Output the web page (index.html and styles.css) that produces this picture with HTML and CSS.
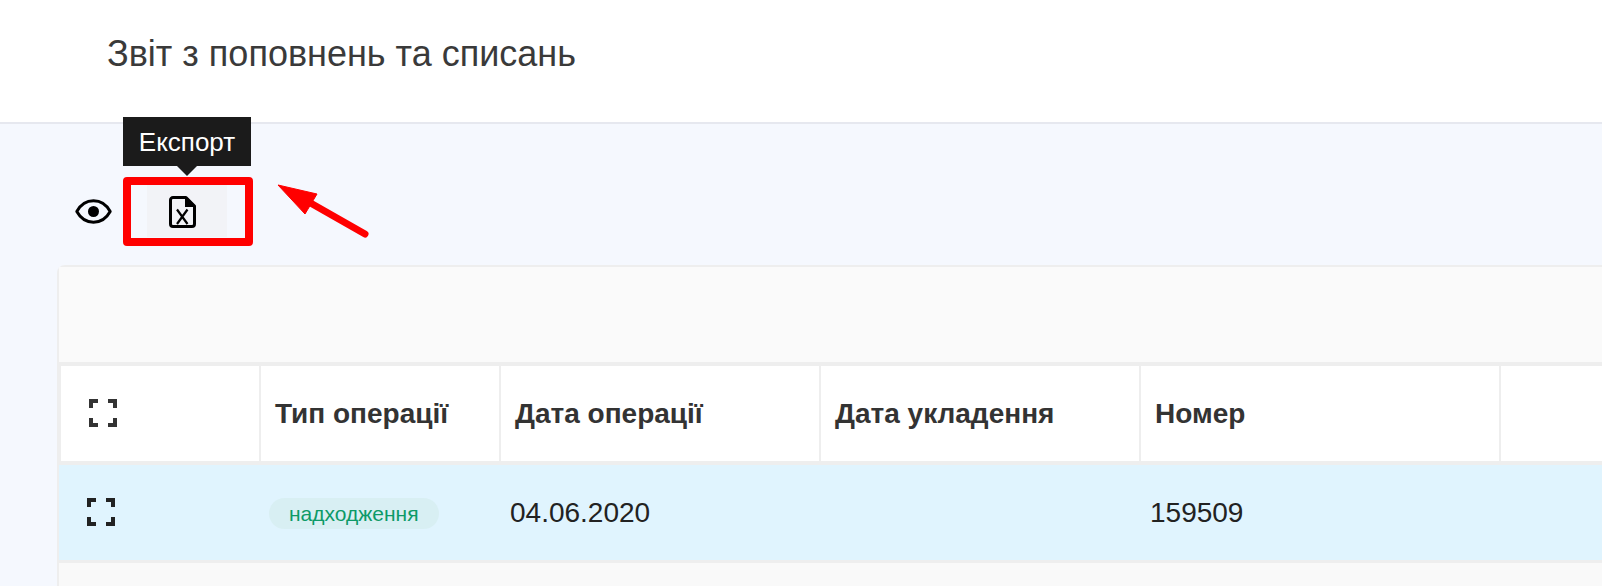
FILE: index.html
```html
<!DOCTYPE html>
<html lang="uk">
<head>
    <meta charset="utf-8">
    <title>Звіт з поповнень та списань</title>
    <link rel="stylesheet" href="styles.css">
</head>
<body>

<header class="title-bar">
    <h1>Звіт з поповнень та списань</h1>
</header>

<!-- Toolbar -->
<div class="toolbar">
    <button type="button" class="tool-eye" aria-label="Колонки">
        <svg width="37" height="25" viewBox="0 0 37 25">
            <path d="M1.8 12.5C5.5 5.8 11.5 1.8 18.5 1.8S31.5 5.8 35.2 12.5C31.5 19.2 25.5 23.2 18.5 23.2S5.5 19.2 1.8 12.5Z" fill="none" stroke="#000" stroke-width="3" stroke-linejoin="round"/>
            <circle cx="18.5" cy="12.5" r="5.5" fill="#000"/>
        </svg>
    </button>
    <div class="export">
        <button type="button" class="tool-export" aria-label="Експорт">
            <svg width="27" height="32" viewBox="0 0 27 32">
                <path d="M4 1.5H17L25.5 10V28A2.5 2.5 0 0 1 23 30.5H4A2.5 2.5 0 0 1 1.5 28V4A2.5 2.5 0 0 1 4 1.5Z" fill="none" stroke="#000" stroke-width="3" stroke-linejoin="round"/>
                <path d="M16 1.5H18L25.5 9V11H16Z" fill="#000"/>
                <path d="M8 13.5L18.5 28M18.5 13.5L8 28" fill="none" stroke="#000" stroke-width="2.2"/>
            </svg>
        </button>
        <div class="tooltip">Експорт</div>
        <div class="highlight"></div>
    </div>
</div>

<!-- Annotation arrow -->
<svg class="arrow" width="100" height="60" viewBox="0 0 100 60">
    <path d="M3 3L42 12L30 32Z" fill="#f00" stroke="#f00" stroke-width="1" stroke-linejoin="round"/>
    <path d="M32 19L90 52" fill="none" stroke="#f00" stroke-width="7" stroke-linecap="round"/>
</svg>

<section class="card">
    <div class="card-top"></div>

    <div class="row row-head">
        <div class="cell cell-icon">
            <svg class="expand" width="28" height="28" viewBox="0 0 28 28">
                <path d="M2 9V2H9M19 2H26V9M26 19V26H19M9 26H2V19" fill="none" stroke="#333" stroke-width="4"/>
            </svg>
        </div>
        <div class="cell">Тип операції</div>
        <div class="cell">Дата операції</div>
        <div class="cell">Дата укладення</div>
        <div class="cell">Номер</div>
        <div class="cell cell-last"></div>
    </div>

    <div class="row row-data">
        <div class="cell cell-icon">
            <svg class="expand" width="28" height="28" viewBox="0 0 28 28">
                <path d="M2 9V2H9M19 2H26V9M26 19V26H19M9 26H2V19" fill="none" stroke="#222" stroke-width="4"/>
            </svg>
        </div>
        <div class="cell"><span class="badge">надходження</span></div>
        <div class="cell">04.06.2020</div>
        <div class="cell"></div>
        <div class="cell">159509</div>
        <div class="cell cell-last"></div>
    </div>

    <div class="row-empty"></div>
</section>

</body>
</html>
```

FILE: styles.css
```css
/* Basic styling */
html, body {
    height: 586px;
    overflow: hidden;
}
body {
    position: relative;
    margin: 0;
    background-color: #f5f8fe;
    font-family: "Liberation Sans", Arial, sans-serif;
    color: #333;
}
button {
    padding: 0;
    border: none;
    background: none;
    cursor: pointer;
}
svg {
    display: block;
}

/* Title */
.title-bar {
    height: 122px;
    padding-left: 107px;
    background-color: #fff;
    border-bottom: 2px solid #e6e8ef;
}
.title-bar h1 {
    margin: 0;
    padding-top: 33px;
    font-size: 36px;
    line-height: 41px;
    font-weight: normal;
    color: #3a3a3a;
}

/* Toolbar */
.toolbar {
    display: flex;
    align-items: center;
    gap: 35px;
    padding: 61px 0 28px 75px;
}
.tool-eye {
    width: 37px;
}
.export {
    position: relative;
}
.tool-export {
    display: flex;
    align-items: center;
    justify-content: center;
    width: 80px;
    height: 52px;
    padding: 2px 10px 0 0;
    background-color: #f2f3f7;
}
.tooltip {
    position: absolute;
    left: -24px;
    top: -68px;
    width: 128px;
    height: 49px;
    background-color: #1b1b1b;
    color: #fff;
    font-size: 26px;
    line-height: 50px;
    text-align: center;
}
.tooltip::after {
    content: "";
    position: absolute;
    left: 54px;
    top: 100%;
    border-left: 10px solid transparent;
    border-right: 10px solid transparent;
    border-top: 10px solid #1b1b1b;
}
.highlight {
    position: absolute;
    left: -24px;
    top: -8px;
    width: 130px;
    height: 69px;
    box-sizing: border-box;
    border: 8px solid #f00;
    border-radius: 4px;
}
.arrow {
    position: absolute;
    left: 275px;
    top: 182px;
}

/* Table card */
.card {
    margin-left: 57px;
    border-top: 2px solid #eee;
    border-left: 2px solid #eee;
    border-top-left-radius: 8px;
    background-color: #f9f9f9;
}
.card-top {
    height: 95px;
    background-color: #fafafa;
    border-bottom: 4px solid #eee;
}
.row {
    display: grid;
    grid-template-columns: 202px 240px 320px 320px 360px 1fr;
    height: 95px;
    border-bottom: 4px solid #eee;
}
.cell {
    display: flex;
    align-items: center;
    box-sizing: border-box;
    border-right: 2px solid transparent;
}
.cell-last {
    border-right: none;
}
.expand {
    margin-top: -2px;
}
.row-head {
    background-color: #fff;
    font-size: 28px;
    line-height: 32px;
    font-weight: bold;
}
.row-head .cell {
    padding-left: 14px;
    border-right-color: #eee;
}
.row-head .cell-icon {
    padding-left: 28px;
    border-left: 2px solid #eee;
}
.row-head .cell-last {
    border-right: none;
}
.row-data {
    background-color: #e0f4fe;
    border-bottom-width: 3px;
    color: #222;
    font-size: 28px;
}
.row-data .cell {
    padding-left: 9px;
}
.row-data .cell-icon {
    padding-left: 28px;
}
.badge {
    display: block;
    height: 31px;
    padding: 0 20px;
    margin: 2px 0 0 -1px;
    border-radius: 16px;
    background-color: #d8eff3;
    color: #0d9a68;
    font-size: 21px;
    line-height: 31px;
}
.row-empty {
    height: 30px;
    background-color: #f9f9f9;
}
```
